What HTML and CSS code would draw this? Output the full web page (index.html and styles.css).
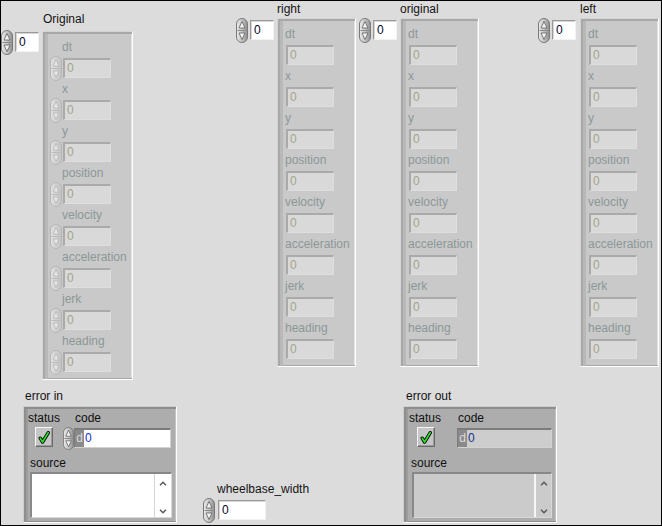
FILE: index.html
```html
<!DOCTYPE html>
<html>
<head>
<meta charset="utf-8">
<link rel="stylesheet" href="styles.css">
</head>
<body>
<svg class="defs" aria-hidden="true">
  <defs>
    <linearGradient id="sg" x1="0" x2="1" y1="0" y2="0">
      <stop offset="0" stop-color="#ececec"/>
      <stop offset="0.5" stop-color="#c4c4c4"/>
      <stop offset="1" stop-color="#8e8e8e"/>
    </linearGradient>
    <linearGradient id="sgd" x1="0" x2="1" y1="0" y2="0">
      <stop offset="0" stop-color="#e2e2e2"/>
      <stop offset="1" stop-color="#c2c2c2"/>
    </linearGradient>
    <symbol id="spin" viewBox="0 0 12 25">
      <rect x="0.5" y="0.5" width="11" height="24" rx="5.5" fill="url(#sg)" stroke="#7a7a7a"/>
      <line x1="1.5" y1="12.5" x2="10.5" y2="12.5" stroke="#8a8a8a"/>
      <path d="M6 3.5 L9 10 L3 10 Z" fill="#f4f4f4" stroke="#5e5e5e" stroke-width="0.8"/>
      <path d="M3 15 L9 15 L6 21.5 Z" fill="#f4f4f4" stroke="#5e5e5e" stroke-width="0.8"/>
    </symbol>
    <symbol id="spind" viewBox="0 0 12 25">
      <rect x="0.5" y="0.5" width="11" height="24" rx="5.5" fill="url(#sgd)" stroke="#b6b6b6"/>
      <line x1="1.5" y1="12.5" x2="10.5" y2="12.5" stroke="#bcbcbc"/>
      <path d="M6 3.5 L9 10 L3 10 Z" fill="#e6e6e6" stroke="#b4b4b4" stroke-width="0.8"/>
      <path d="M3 15 L9 15 L6 21.5 Z" fill="#e6e6e6" stroke="#b4b4b4" stroke-width="0.8"/>
    </symbol>
    <symbol id="check" viewBox="0 0 12 13">
      <path d="M2.2 7.2 L4.6 11 L10.2 1.8" fill="none" stroke="#000" stroke-width="3.4" stroke-linecap="round" stroke-linejoin="round"/>
      <path d="M2.2 7.2 L4.6 11 L10.2 1.8" fill="none" stroke="#2ee02e" stroke-width="1.7" stroke-linecap="round" stroke-linejoin="round"/>
    </symbol>
    <symbol id="up" viewBox="0 0 8 5">
      <path d="M1 4.2 L4 1.2 L7 4.2" fill="none" stroke="#5a5a5a" stroke-width="1.5"/>
    </symbol>
    <symbol id="down" viewBox="0 0 8 5">
      <path d="M1 0.8 L4 3.8 L7 0.8" fill="none" stroke="#5a5a5a" stroke-width="1.5"/>
    </symbol>
  </defs>
</svg>

<div class="panel">

  <!-- unlabeled numeric controls -->
  <div class="obj o-topleft num">
    <svg class="spin"><use href="#spin"/></svg>
    <div class="nfield">0</div>
  </div>
  <div class="obj o-ctl-right num">
    <svg class="spin"><use href="#spin"/></svg>
    <div class="nfield">0</div>
  </div>
  <div class="obj o-ctl-orig num">
    <svg class="spin"><use href="#spin"/></svg>
    <div class="nfield">0</div>
  </div>
  <div class="obj o-ctl-left num">
    <svg class="spin"><use href="#spin"/></svg>
    <div class="nfield">0</div>
  </div>

  <!-- Original cluster (disabled controls) -->
  <div class="obj o-Original">
    <div class="clabel">Original</div>
    <div class="cbox wide">
      <div class="item"><div class="ilabel">dt</div><div class="irow"><svg class="spin sm"><use href="#spind"/></svg><div class="ifield">0</div></div></div>
      <div class="item"><div class="ilabel">x</div><div class="irow"><svg class="spin sm"><use href="#spind"/></svg><div class="ifield">0</div></div></div>
      <div class="item"><div class="ilabel">y</div><div class="irow"><svg class="spin sm"><use href="#spind"/></svg><div class="ifield">0</div></div></div>
      <div class="item"><div class="ilabel">position</div><div class="irow"><svg class="spin sm"><use href="#spind"/></svg><div class="ifield">0</div></div></div>
      <div class="item"><div class="ilabel">velocity</div><div class="irow"><svg class="spin sm"><use href="#spind"/></svg><div class="ifield">0</div></div></div>
      <div class="item"><div class="ilabel">acceleration</div><div class="irow"><svg class="spin sm"><use href="#spind"/></svg><div class="ifield">0</div></div></div>
      <div class="item"><div class="ilabel">jerk</div><div class="irow"><svg class="spin sm"><use href="#spind"/></svg><div class="ifield">0</div></div></div>
      <div class="item"><div class="ilabel">heading</div><div class="irow"><svg class="spin sm"><use href="#spind"/></svg><div class="ifield">0</div></div></div>
    </div>
  </div>

  <!-- right cluster -->
  <div class="obj o-right">
    <div class="clabel">right</div>
    <div class="cbox narrow">
      <div class="item"><div class="ilabel">dt</div><div class="irow"><div class="ifield">0</div></div></div>
      <div class="item"><div class="ilabel">x</div><div class="irow"><div class="ifield">0</div></div></div>
      <div class="item"><div class="ilabel">y</div><div class="irow"><div class="ifield">0</div></div></div>
      <div class="item"><div class="ilabel">position</div><div class="irow"><div class="ifield">0</div></div></div>
      <div class="item"><div class="ilabel">velocity</div><div class="irow"><div class="ifield">0</div></div></div>
      <div class="item"><div class="ilabel">acceleration</div><div class="irow"><div class="ifield">0</div></div></div>
      <div class="item"><div class="ilabel">jerk</div><div class="irow"><div class="ifield">0</div></div></div>
      <div class="item"><div class="ilabel">heading</div><div class="irow"><div class="ifield">0</div></div></div>
    </div>
  </div>

  <!-- original cluster -->
  <div class="obj o-original">
    <div class="clabel">original</div>
    <div class="cbox narrow">
      <div class="item"><div class="ilabel">dt</div><div class="irow"><div class="ifield">0</div></div></div>
      <div class="item"><div class="ilabel">x</div><div class="irow"><div class="ifield">0</div></div></div>
      <div class="item"><div class="ilabel">y</div><div class="irow"><div class="ifield">0</div></div></div>
      <div class="item"><div class="ilabel">position</div><div class="irow"><div class="ifield">0</div></div></div>
      <div class="item"><div class="ilabel">velocity</div><div class="irow"><div class="ifield">0</div></div></div>
      <div class="item"><div class="ilabel">acceleration</div><div class="irow"><div class="ifield">0</div></div></div>
      <div class="item"><div class="ilabel">jerk</div><div class="irow"><div class="ifield">0</div></div></div>
      <div class="item"><div class="ilabel">heading</div><div class="irow"><div class="ifield">0</div></div></div>
    </div>
  </div>

  <!-- left cluster -->
  <div class="obj o-left">
    <div class="clabel">left</div>
    <div class="cbox narrow">
      <div class="item"><div class="ilabel">dt</div><div class="irow"><div class="ifield">0</div></div></div>
      <div class="item"><div class="ilabel">x</div><div class="irow"><div class="ifield">0</div></div></div>
      <div class="item"><div class="ilabel">y</div><div class="irow"><div class="ifield">0</div></div></div>
      <div class="item"><div class="ilabel">position</div><div class="irow"><div class="ifield">0</div></div></div>
      <div class="item"><div class="ilabel">velocity</div><div class="irow"><div class="ifield">0</div></div></div>
      <div class="item"><div class="ilabel">acceleration</div><div class="irow"><div class="ifield">0</div></div></div>
      <div class="item"><div class="ilabel">jerk</div><div class="irow"><div class="ifield">0</div></div></div>
      <div class="item"><div class="ilabel">heading</div><div class="irow"><div class="ifield">0</div></div></div>
    </div>
  </div>

  <!-- error in -->
  <div class="obj o-errin">
    <div class="clabel">error in</div>
    <div class="ebox ein">
      <div class="egrid">
        <div class="elbl">status</div>
        <div class="elbl codel">code</div>
        <div class="chk"><svg class="chkic"><use href="#check"/></svg></div>
        <div class="coderow">
          <svg class="spin es"><use href="#spin"/></svg>
          <div class="codef"><span class="dpre">d</span><span class="cv">0</span></div>
        </div>
      </div>
      <div class="elbl srcl">source</div>
      <div class="src">
        <div class="srctext"></div>
        <div class="sbar"><svg class="chev"><use href="#up"/></svg><svg class="chev"><use href="#down"/></svg></div>
      </div>
    </div>
  </div>

  <!-- error out -->
  <div class="obj o-errout">
    <div class="clabel">error out</div>
    <div class="ebox eout">
      <div class="egrid">
        <div class="elbl">status</div>
        <div class="elbl codel">code</div>
        <div class="chk"><svg class="chkic"><use href="#check"/></svg></div>
        <div class="coderow">
          <div class="codef"><span class="dpre">d</span><span class="cv">0</span></div>
        </div>
      </div>
      <div class="elbl srcl">source</div>
      <div class="src">
        <div class="srctext"></div>
        <div class="sbar"><svg class="chev"><use href="#up"/></svg><svg class="chev"><use href="#down"/></svg></div>
      </div>
    </div>
  </div>

  <!-- wheelbase_width -->
  <div class="obj o-wheel">
    <div class="clabel">wheelbase_width</div>
    <div class="num">
      <svg class="spin"><use href="#spin"/></svg>
      <div class="nfield wfield">0</div>
    </div>
  </div>

</div>
</body>
</html>
```

FILE: styles.css
```css
* { box-sizing: border-box; }
html, body { margin: 0; padding: 0; background: #dcdcdc; }
body {
  font-family: "Liberation Sans", Arial, sans-serif;
  font-size: 12px;
  line-height: 14px;
  color: #141414;
}
.defs { position: absolute; width: 0; height: 0; overflow: hidden; }

.panel {
  position: relative;
  width: 662px;
  height: 526px;
  background: #dcdcdc;
  overflow: hidden;
}
.panel::after {
  content: "";
  position: absolute;
  inset: 0;
  border: 1px solid #000;
  pointer-events: none;
}

/* free-canvas placement of front-panel objects */
.obj { position: absolute; }
.o-topleft { left: 1px; top: 32px; }
.o-ctl-right { left: 236px; top: 20px; }
.o-ctl-orig { left: 359px; top: 20px; }
.o-ctl-left { left: 538px; top: 20px; }
.o-Original { left: 42px; top: 12px; }
.o-right { left: 277px; top: 2px; }
.o-original { left: 400px; top: 2px; }
.o-left { left: 580px; top: 2px; }
.o-errin { left: 23px; top: 389px; }
.o-errout { left: 403px; top: 389px; }
.o-wheel { left: 203px; top: 482px; }

.clabel { line-height: 14px; white-space: nowrap; }
.o-Original .clabel { margin-left: 1px; }
.o-Original .cbox { margin-top: 5px; }
.o-right .cbox, .o-original .cbox, .o-left .cbox { margin-top: 2px; }
.o-errin .clabel { margin-left: 2px; }
.o-errout .clabel { margin-left: 3px; }
.o-wheel .clabel { margin-left: 14px; }

/* numeric control */
.num { display: flex; align-items: center; height: 20px; }
.o-wheel .num { margin-top: 4px; }
.spin { width: 12px; height: 25px; flex: none; margin-right: 2px; }
.o-ctl-right .spin, .o-ctl-orig .spin, .o-ctl-left .spin { margin-right: 2px; }
.o-wheel .spin { margin-right: 3px; }
.nfield {
  width: 24px;
  height: 20px;
  background: #fff;
  border: 1px solid;
  border-color: #9a9a9a #f2f2f2 #f2f2f2 #9a9a9a;
  box-shadow: inset 1px 1px 0 #d6d6d6;
  padding-left: 3px;
  line-height: 18px;
  color: #050528;
}
.wfield { width: 48px; }

/* clusters */
.cbox {
  background: #c9c9c9;
  border: 1px solid;
  border-color: #d4d4d4 #fff #fff #d4d4d4;
  box-shadow: inset 2px 2px 0 #a8a8a8, inset 5px 0 0 #b8b8b8, inset 0 -1px 0 #a8a8a8, inset -1px 0 0 #e2e2e2;
  padding: 8px 7px 7px 7px;
  display: flex;
  flex-direction: column;
  gap: 4px;
}
.wide { width: 91px; }
.narrow { width: 79px; }
.item { display: flex; flex-direction: column; gap: 4px; }
.ilabel { color: #8b9898; line-height: 14px; white-space: nowrap; }
.wide .ilabel { padding-left: 12px; }
.irow { display: flex; align-items: center; height: 20px; }
.spin.sm { margin-right: 1px; }
.ifield {
  width: 48px;
  height: 20px;
  background: #d9d9d9;
  border-top: 2px solid #aaaaaa;
  border-left: 2px solid #aaaaaa;
  border-right: 1px solid #dedede;
  border-bottom: 1px solid #dedede;
  padding-left: 2px;
  line-height: 17px;
  color: #a4a48a;
}
.narrow .ifield { margin-left: 1px; }

/* error clusters */
.ebox {
  width: 154px;
  height: 117px;
  margin-top: 3px;
  background: #adadad;
  border: 1px solid;
  border-color: #cdcdcd #fff #fff #cdcdcd;
  box-shadow: inset 2px 2px 0 #8e8e8e, inset 4px 0 0 #9c9c9c, inset 0 -1px 0 #8e8e8e, inset -1px 0 0 #c4c4c4;
  padding: 4px 0 0 4px;
}
.eout { padding-left: 5px; }
.egrid {
  display: grid;
  grid-template-columns: 34px auto;
  column-gap: 1px;
  row-gap: 2px;
  align-items: start;
}
.eout .egrid { grid-template-columns: 36px auto; column-gap: 12px; }
.elbl { line-height: 14px; color: #111; white-space: nowrap; }
.ein .codel { padding-left: 12px; }
.eout .codel { padding-left: 1px; }
.chk {
  width: 18px;
  height: 20px;
  margin-left: 7px;
  background: #c6c6c6;
  border: 1px solid;
  border-color: #f6f6f6 #6a6a6a #6a6a6a #f6f6f6;
  box-shadow: inset -1px -1px 0 #9a9a9a;
  display: flex;
  align-items: center;
  justify-content: center;
}
.eout .chk { margin-left: 8px; }
.chkic { width: 12px; height: 13px; }
.coderow { display: flex; align-items: center; height: 20px; margin-top: 1px; }
.spin.es { width: 11px; margin-right: 0; }
.codef {
  width: 97px;
  height: 20px;
  display: flex;
  background: #fff;
  border-top: 2px solid #7c7c7c;
  border-left: 1px solid #7c7c7c;
  border-right: 1px solid #d2d2d2;
  border-bottom: 1px solid #d2d2d2;
}
.eout .codef { width: 95px; background: #cdcdcd; }
.dpre {
  width: 9px;
  background: #8a8a8a;
  color: #dadada;
  text-align: center;
  line-height: 17px;
}
.cv { color: #1232d8; padding-left: 1px; line-height: 17px; }
.eout .cv { color: #18308a; }
.srcl { margin-top: 8px; margin-left: 2px; }
.src {
  margin-top: 2px;
  margin-left: 2px;
  width: 142px;
  height: 46px;
  display: flex;
  background: #fff;
  border-top: 2px solid #888888;
  border-left: 2px solid #888888;
  border-right: 1px solid #d8d8d8;
  border-bottom: 1px solid #d8d8d8;
}
.eout .srcl { margin-left: 2px; }
.eout .src { margin-left: 3px; width: 140px; background: #cbcbcb; }
.srctext { flex: 1; }
.sbar {
  width: 17px;
  border-left: 1px solid #d4d4d4;
  display: flex;
  flex-direction: column;
  justify-content: space-between;
  align-items: center;
  padding: 7px 0 3px;
}
.eout .sbar { border-left: 2px solid #f6f6f6; }
.chev { width: 8px; height: 5px; }
```
